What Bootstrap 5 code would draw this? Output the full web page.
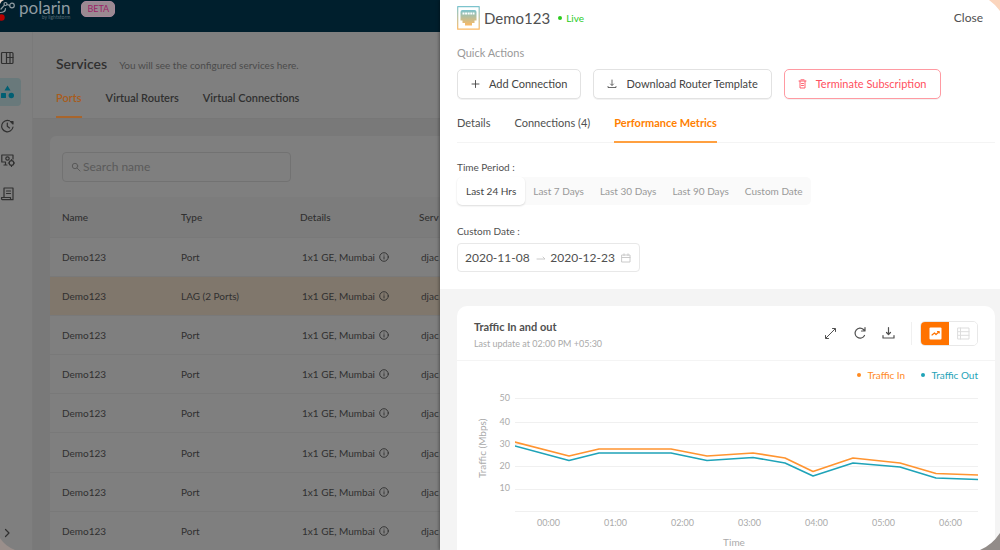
<!DOCTYPE html>
<html lang="en">
<head>
<meta charset="utf-8">
<meta name="viewport" content="width=device-width, initial-scale=1">
<title>Polarin – Services</title>
<link rel="stylesheet" href="https://cdn.jsdelivr.net/npm/bootstrap@5.3.0/dist/css/bootstrap.min.css">
<style>
  body { font: 10px/16px Lato, "Open Sans", sans-serif; color: #505050; background: #f4f4f4; }
  a { color: inherit; text-decoration: none; }
  svg { display: block; flex: none; fill: none; stroke: currentColor; stroke-linecap: round; stroke-linejoin: round; }
  .fs-11 { font-size: 11px; } .fs-12 { font-size: 12px; } .fs-14 { font-size: 14px; } .fs-15 { font-size: 15px; }
  .text-soft { color: #999; }

  /* Services page, dimmed while the drawer is open */
  .backpage { width: 44%; background: #797979; color: #303030; }
  .topbar { height: 32px; background: #001f2d; color: #8f9ba1; }
  .brand-name { font-size: 17px; line-height: 15px; }
  .brand-by { font-size: 5px; line-height: 5px; color: #536974; }
  .beta { background: #9a8a92; color: #9c2268; font-size: 9px; line-height: 14px; border: 1px solid #a5879a; border-radius: 5px; margin: 1px 0 0 11px; padding: 0 5px; }
  .rail { width: 33px; background: #7f7f7f; border-right: 1px solid #7a7a7a; padding: 12px 0 4px; }
  .rail a { width: 21px; height: 28px; border-radius: 0 4px 4px 0; }
  .rail .on { background: #69797b; color: #005f73; }
  .rail-links { row-gap: 6px; }
  .page-head { background: #7f7f7f; padding: 21px 0 0 23px; border-bottom: 1px solid #777; }
  .tab-row { gap: 24px; }
  .tab-row a { padding-bottom: 10px; border-bottom: 2px solid transparent; }
  .backpage .on-tab { color: #a85c1c; border-color: #a8652c; }
  .backpage .text-soft { color: #4b4b4b; }
  .panel { background: #7f7f7f; border-radius: 6px 0 0 0; margin: 17px 0 0 17px; }
  .search { width: 229px; height: 30px; border: 1px solid #727272; border-radius: 4px; margin: 16px 12px 15px; padding-left: 8px; gap: 2px; color: #5a5a5a; }
  .search input, .range input { border: 0; outline: 0; background: none; padding: 0; color: inherit; min-width: 0; }
  .search input::placeholder { color: #5a5a5a; opacity: 1; }
  .ports { table-layout: fixed; width: 476px; height: 354px; }
  .ports th, .ports td { padding: 0 0 0 12px; vertical-align: middle; white-space: nowrap; border-bottom: 1px solid #797979; }
  .ports th { height: 40px; background: #7c7c7c; font-weight: 500; }
  .ports td { height: 39px; }
  .ports td:nth-child(n+3) { padding-left: 14px; }
  .ports .picked td { background: #80776c; }

  /* Drawer */
  .drawer { width: 56%; background: #f4f4f4; box-shadow: -1px 0 3px rgba(0,0,0,.35); z-index: 1; }
  .drawer-top { background: #fff; padding: 6px 5px 17px 17px; }
  .quick { margin: 15px 0 8px; }
  .plain { border: 0; background: none; padding: 0; color: inherit; }
  .action-row { column-gap: 12px; }
  .action { height: 30px; border: 1px solid #e2e2e2; border-radius: 5px; background: #fff; color: #444; font-size: 11px; line-height: 16px; box-shadow: 0 1px 0 #f2f2f2; gap: 9px; padding: 0 13px; }
  .action.stop { color: #ff5060; border-color: #ff9aa2; }
  .live { color: #2bcb1f; gap: 4px; margin-left: 8px; }
  .dot { width: 4px; height: 4px; border-radius: 50%; background: currentColor; }
  .drawer .tab-row { border-bottom: 1px solid #f4f4f4; }
  .drawer .tab-row a { padding-bottom: 10px; margin-bottom: -1px; }
  .drawer .on-tab { color: #ff8000; border-color: #ffa040; }
  .segments { background: #fafafa; border-radius: 5px; height: 28px; margin: 2px 0; }
  .segments label { padding: 6px 8px; color: #999; border-radius: 5px; }
  .segments .btn-check:checked + label { background: #fff; color: #444; padding: 6px 9px; box-shadow: 0 1px 2px rgba(0,0,0,.14); }
  .range { width: 183px; height: 29px; border: 1px solid #e8e8e8; border-radius: 4px; padding: 0 8px 0 7px; color: #c4c4c4; }
  .range input { width: 66px; font-size: 12px; color: #505050; }
  .chart-card { margin: 17px 5px 0 17px; background: #fff; border-radius: 10px 10px 0 0; }
  .chart-head { height: 55px; padding: 0 17px; border-bottom: 1px solid #f4f4f4; }
  .chart-body { padding: 6px 17px 16px; }
  .stamp { font-size: 9px; line-height: 12px; color: #aaa; }
  .rule { width: 1px; height: 23px; background: #f0f0f0; }
  .toggle { height: 25px; border: 1px solid #e8e8e8; border-radius: 5px; overflow: hidden; }
  .toggle button { width: 28px; border: 0; background: #fff; color: #ddd; padding: 0; display: grid; place-items: center; }
  .toggle .on { background: #ff7300; color: #fff; }
  .c-in { color: #ff8a1f; } .c-out { color: #1fa3b8; }
  .axis { font-size: 9px; color: #aaa; }
  .y-title { writing-mode: vertical-rl; transform: rotate(180deg); font-size: 10px; width: 16px; height: 122px; }
  .y-scale { width: 25px; padding-right: 5px; line-height: 22px; }
  .y-scale span:first-child { margin-bottom: 2px; }
  .plot { padding-top: 11px; }
  .plot svg { width: 100%; height: 114px; }
  .plot path { vector-effect: non-scaling-stroke; }
  .hours { display: grid; grid-template-columns: repeat(7, 1fr); margin: 3px -6px 3px 0; }
  .corner { position: fixed; stroke: none; z-index: 2; }
</style>
</head>
<body class="vh-100 overflow-hidden d-flex">

<div class="backpage d-flex flex-column flex-shrink-0 overflow-hidden">
  <header class="topbar d-flex align-items-start flex-shrink-0">
    <svg width="15" height="22" viewBox="0 0 15 22" stroke-width="1.2">
      <circle cx="12" cy="5.500" r="2.300"/><circle cx="5.500" cy="4" r="1.500"/><path d="M7 4.500L9.700 5.300M4.500 5.200L1 9M0 12.500C3.500 12.500 5.500 11 5.500 8.500"/>
      <circle cx="1.500" cy="17.500" r="3.200" fill="#b80000" stroke="none"/>
    </svg>
    <div class="text-end ps-1">
      <div class="brand-name">polarin</div>
      <div class="brand-by">by lightstorm</div>
    </div>
    <span class="beta">BETA</span>
  </header>

  <div class="d-flex flex-grow-1">
    <nav class="rail d-flex flex-column flex-shrink-0 justify-content-between" aria-label="Sections">
      <div class="rail-links d-grid">
        <a href="#" class="d-flex align-items-center" aria-label="Dashboard"><svg width="14" height="14" viewBox="0 0 14 14" stroke-width="1.200"><rect x="1.500" y="1.500" width="11.500" height="11" rx="1"/><path d="M6.500 1.500V12.500M10 1.500V12.500M6.500 6.500H13"/></svg></a>
        <a href="#" class="on d-flex align-items-center" aria-label="Services"><svg width="14" height="14" viewBox="0 0 14 14"><g fill="currentColor" stroke="none"><path d="M7.500 0.500L10.500 5.500H4.500Z"/><rect x="1" y="8" width="5" height="5" rx=".5"/><circle cx="11.300" cy="10.500" r="2.700"/></g></svg></a>
        <a href="#" class="d-flex align-items-center" aria-label="History"><svg width="14" height="14" viewBox="0 0 14 14" stroke-width="1.200"><path d="M9.500 1.800A5.700 5.700 0 1 0 13 8M7.300 4V7.300L9.500 9"/><path d="M10.500 2.500H13V5Z" fill="currentColor"/></svg></a>
        <a href="#" class="d-flex align-items-center" aria-label="Network settings"><svg width="15" height="14" viewBox="0 0 15 14" stroke-width="1.200"><path d="M1.800 9V2H13V6M4 12H7M2 9H5.500M5.500 9V12"/><circle cx="7.500" cy="5.500" r="1.700"/><circle cx="11.500" cy="10" r="2.300"/><path d="M11.500 7V6.500M11.500 13.500V13M8.700 10H8.300M14.700 10H14.300"/></svg></a>
        <a href="#" class="d-flex align-items-center" aria-label="Invoices"><svg width="14" height="14" viewBox="0 0 14 14" stroke-width="1.200"><path d="M4 10V1H13V12.700H2.500C1.500 12.700 1.500 12 1.500 10.500H10.500V12.500M6.500 4H10.500M6.500 6.500H10.500"/></svg></a>
      </div>
      <a href="#" class="d-flex align-items-center" aria-label="Expand menu"><svg width="14" height="14" viewBox="0 0 14 14" stroke-width="1.200"><path d="M5.500 3.500L9 7L5.500 10.500"/></svg></a>
    </nav>

    <main class="flex-grow-1 overflow-hidden">
      <div class="page-head">
        <div class="d-flex align-items-baseline pb-1">
          <h1 class="fs-14 fw-semibold mb-0 lh-base">Services</h1>
          <span class="text-soft ms-2 ps-1">You will see the configured services here.</span>
        </div>
        <nav class="tab-row d-flex fs-11 fw-semibold pt-2 mt-1" aria-label="Service types">
          <a href="#" class="on-tab">Ports</a><a href="#">Virtual Routers</a><a href="#">Virtual Connections</a>
        </nav>
      </div>
      <div class="panel overflow-hidden">
        <label class="search d-flex align-items-center">
          <svg width="10" height="10" viewBox="0 0 10 10"><circle cx="4" cy="4" r="2.700"/><path d="M6 6L9 9"/></svg>
          <input type="text" class="fs-12" placeholder="Search name" aria-label="Search name">
        </label>
        <table class="ports">
          <thead><tr><th>Name</th><th>Type</th><th>Details</th><th>Serv</th></tr></thead>
          <tbody id="rows"></tbody>
        </table>
      </div>
    </main>
  </div>
</div>

<aside class="drawer flex-shrink-0 overflow-hidden" aria-label="Port details">
  <div class="drawer-top">
    <div class="d-flex align-items-center">
      <svg width="23" height="24" viewBox="0 0 23 24">
        <defs><linearGradient id="port" x1="0" y1="0" x2="0" y2="1"><stop offset="0" stop-color="#7cc3cd"/><stop offset="1" stop-color="#fcb963"/></linearGradient></defs>
        <rect x=".7" y=".7" width="21.500" height="22.500" stroke="url(#port)" stroke-width="1.200"/>
        <path d="M3.500 6Q3.500 4 5.500 4H17.500Q19.500 4 19.500 6V14.500H17.500V17H15V19.500H8V17H5.500V14.500H3.500Z" fill="url(#port)" stroke="none"/>
        <path d="M5.500 7.500H17.500" stroke="#fff" stroke-width="2" stroke-dasharray="2 .6" stroke-linecap="butt"/>
      </svg>
      <h2 class="fs-15 fw-normal mb-0 ms-1">Demo123</h2>
      <span class="live d-flex align-items-center"><i class="dot"></i>Live</span>
      <button type="button" class="plain fs-12 ms-auto me-2 pe-1">Close</button>
    </div>
    <div class="quick text-soft fs-11">Quick Actions</div>
    <div class="action-row d-flex">
      <button type="button" class="action d-flex align-items-center"><svg width="9" height="10" viewBox="0 0 9 10" stroke-width=".9"><path d="M4.500 1.500V8.500M1 5H8"/></svg>Add Connection</button>
      <button type="button" class="action d-flex align-items-center"><svg width="10" height="10" viewBox="0 0 10 10" stroke-width=".8"><path d="M5 1V6M3.500 5L5 6.500L6.500 5M1 7.500V8.500H9V7.500"/></svg>Download Router Template</button>
      <button type="button" class="action stop d-flex align-items-center"><svg width="9" height="10" viewBox="0 0 9 10" stroke-width=".9"><path d="M1 2H8M2 2V9H7V2M3 .8H6M3.500 4.500H5.500M3.500 6.500H5.500"/></svg>Terminate Subscription</button>
    </div>
    <nav class="tab-row d-flex fs-11 pt-3" aria-label="Port sections">
      <a href="#">Details</a><a href="#">Connections (4)</a><a href="#" class="on-tab fw-bold">Performance Metrics</a>
    </nav>
    <div class="mt-3">Time Period :</div>
    <div class="segments d-inline-flex" role="group" aria-label="Time period">
      <input type="radio" class="btn-check" name="period" id="p1" checked><label for="p1">Last 24 Hrs</label>
      <input type="radio" class="btn-check" name="period" id="p2"><label for="p2">Last 7 Days</label>
      <input type="radio" class="btn-check" name="period" id="p3"><label for="p3">Last 30 Days</label>
      <input type="radio" class="btn-check" name="period" id="p4"><label for="p4">Last 90 Days</label>
      <input type="radio" class="btn-check" name="period" id="p5"><label for="p5">Custom Date</label>
    </div>
    <div class="pt-3"><label for="from">Custom Date :</label></div>
    <div class="range d-flex align-items-center justify-content-between mt-1">
      <input type="text" id="from" value="2020-11-08">
      <svg width="10" height="8" viewBox="0 0 10 8" stroke-width=".9"><path d="M1 5H9L7 3"/></svg>
      <input type="text" aria-label="End date" value="2020-12-23">
      <svg width="10" height="10" viewBox="0 0 10 10" stroke-width=".9"><path d="M1 2H9V9H1ZM1 4.500H9M3 .8V2.500M7 .8V2.500"/></svg>
    </div>
  </div>

  <section class="chart-card">
    <div class="chart-head d-flex align-items-center justify-content-between">
      <div class="pt-1">
        <h3 class="fs-11 fw-bold mb-1">Traffic In and out</h3>
        <div class="stamp">Last update at 02:00 PM +05:30</div>
      </div>
      <div class="d-flex align-items-center">
        <div class="d-flex gap-3 me-3">
          <button type="button" class="plain" aria-label="Expand"><svg width="13" height="14" viewBox="0 0 13 14"><path d="M2 12L11 3M8.500 2.500H11.500V5.500M4.500 12.500H1.500V9.500"/></svg></button>
          <button type="button" class="plain" aria-label="Refresh"><svg width="13" height="14" viewBox="0 0 13 14" stroke-width="1.200"><path d="M11.500 9.500A5 5 0 1 1 10.500 3.500L11.500 4.500M12 1.500V5H8.500"/></svg></button>
          <button type="button" class="plain" aria-label="Download"><svg width="13" height="14" viewBox="0 0 13 14" stroke-width="1.200"><path d="M6.500 1.500V8.500M4.500 6.500L6.500 8.500L8.500 6.500M1 9.500V12H12V9.500"/></svg></button>
        </div>
        <i class="rule"></i>
        <div class="toggle d-flex ms-2">
          <button type="button" class="on" aria-label="Chart view"><svg width="13" height="13" viewBox="0 0 13 13"><rect x=".5" y=".5" width="12" height="12" rx="1" fill="#fff" stroke="none"/><path d="M3 8L5.500 6L7 7.500L10 4.800M8.500 4.500H10.200V6" stroke="#ff7300" stroke-width="1.200"/></svg></button>
          <button type="button" aria-label="Table view"><svg width="13" height="13" viewBox="0 0 13 13"><path d="M1 1H12V12H1ZM1 4.700H12M1 8.300H12M3.500 1V12"/></svg></button>
        </div>
      </div>
    </div>
    <div class="chart-body">
      <div class="d-flex justify-content-end gap-3">
        <span class="c-in d-flex align-items-center"><i class="dot me-1"></i>&nbsp;Traffic In</span>
        <span class="c-out d-flex align-items-center"><i class="dot me-1"></i>&nbsp;Traffic Out</span>
      </div>
      <div class="d-flex axis mt-1">
        <div class="y-title text-center">Traffic (Mbps)</div>
        <div class="y-scale d-flex flex-column text-end"><span>50</span><span>40</span><span>30</span><span>20</span><span>10</span></div>
        <div class="plot flex-grow-1 text-center">
          <svg viewBox="0 0 463 114" preserveAspectRatio="none" role="img" aria-label="Traffic in and out over time">
            <path d="M0 .5H463M0 24.500H463M0 46.500H463M0 68.500H463M0 91.500H463M0 113.500H463" stroke="#f0f0f0"/>
            <path d="M0 48L54 62.500L84 55H156L192 62.500L238 59.500L270 65L298 78L338 65L385 69L421 80L463 81.500" stroke="#1fa3b8" stroke-width="1.600"/>
            <path d="M0 44L54 58L84 51H156L192 58L238 55L270 60L298 73.500L338 60L385 65L421 75.500L463 77" stroke="#ff9430" stroke-width="1.700"/>
          </svg>
          <div class="hours"><span>00:00</span><span>01:00</span><span>02:00</span><span>03:00</span><span>04:00</span><span>05:00</span><span>06:00</span></div>
        </div>
      </div>
      <div class="text-center ms-3 c-axis" style="color:#aaa">Time</div>
    </div>
  </section>
</aside>

<svg class="corner top-0 start-0" width="4" height="4" viewBox="0 0 4 4"><path d="M0 0H4Q1 1 0 4Z" fill="#ecd8cc"/></svg>
<svg class="corner top-0 end-0" width="11" height="11" viewBox="0 0 11 11"><path d="M0 0H11V11Q7 5 0 0Z" fill="#fbd5bd"/></svg>
<svg class="corner bottom-0 start-0" width="15" height="12" viewBox="0 0 15 12"><path d="M0 0Q5 8 15 12H0Z" fill="#9a8f8b"/></svg>
<svg class="corner bottom-0 end-0" width="20" height="17" viewBox="0 0 20 17"><path d="M20 0Q12 12 0 17H20Z" fill="#928c89"/></svg>

<script src="https://cdn.jsdelivr.net/npm/bootstrap@5.3.0/dist/js/bootstrap.bundle.min.js"></script>
<script>
  const types = ['Port', 'LAG (2 Ports)', 'Port', 'Port', 'Port', 'Port', 'Port', 'Port'];
  const info = '<svg width="10" height="10" viewBox="0 0 10 10" stroke-width=".9"><circle cx="5" cy="5" r="4.300"/><path d="M5 4.700V7M5 3V3.100"/></svg>';
  document.getElementById('rows').innerHTML = types.map((t, i) =>
    `<tr class="${i === 1 ? 'picked' : ''}"><td>Demo123</td><td>${t}</td><td><span class="d-flex align-items-center gap-1">1x1 GE, Mumbai ${info}</span></td><td>djac</td></tr>`).join('');
</script>
</body>
</html>
